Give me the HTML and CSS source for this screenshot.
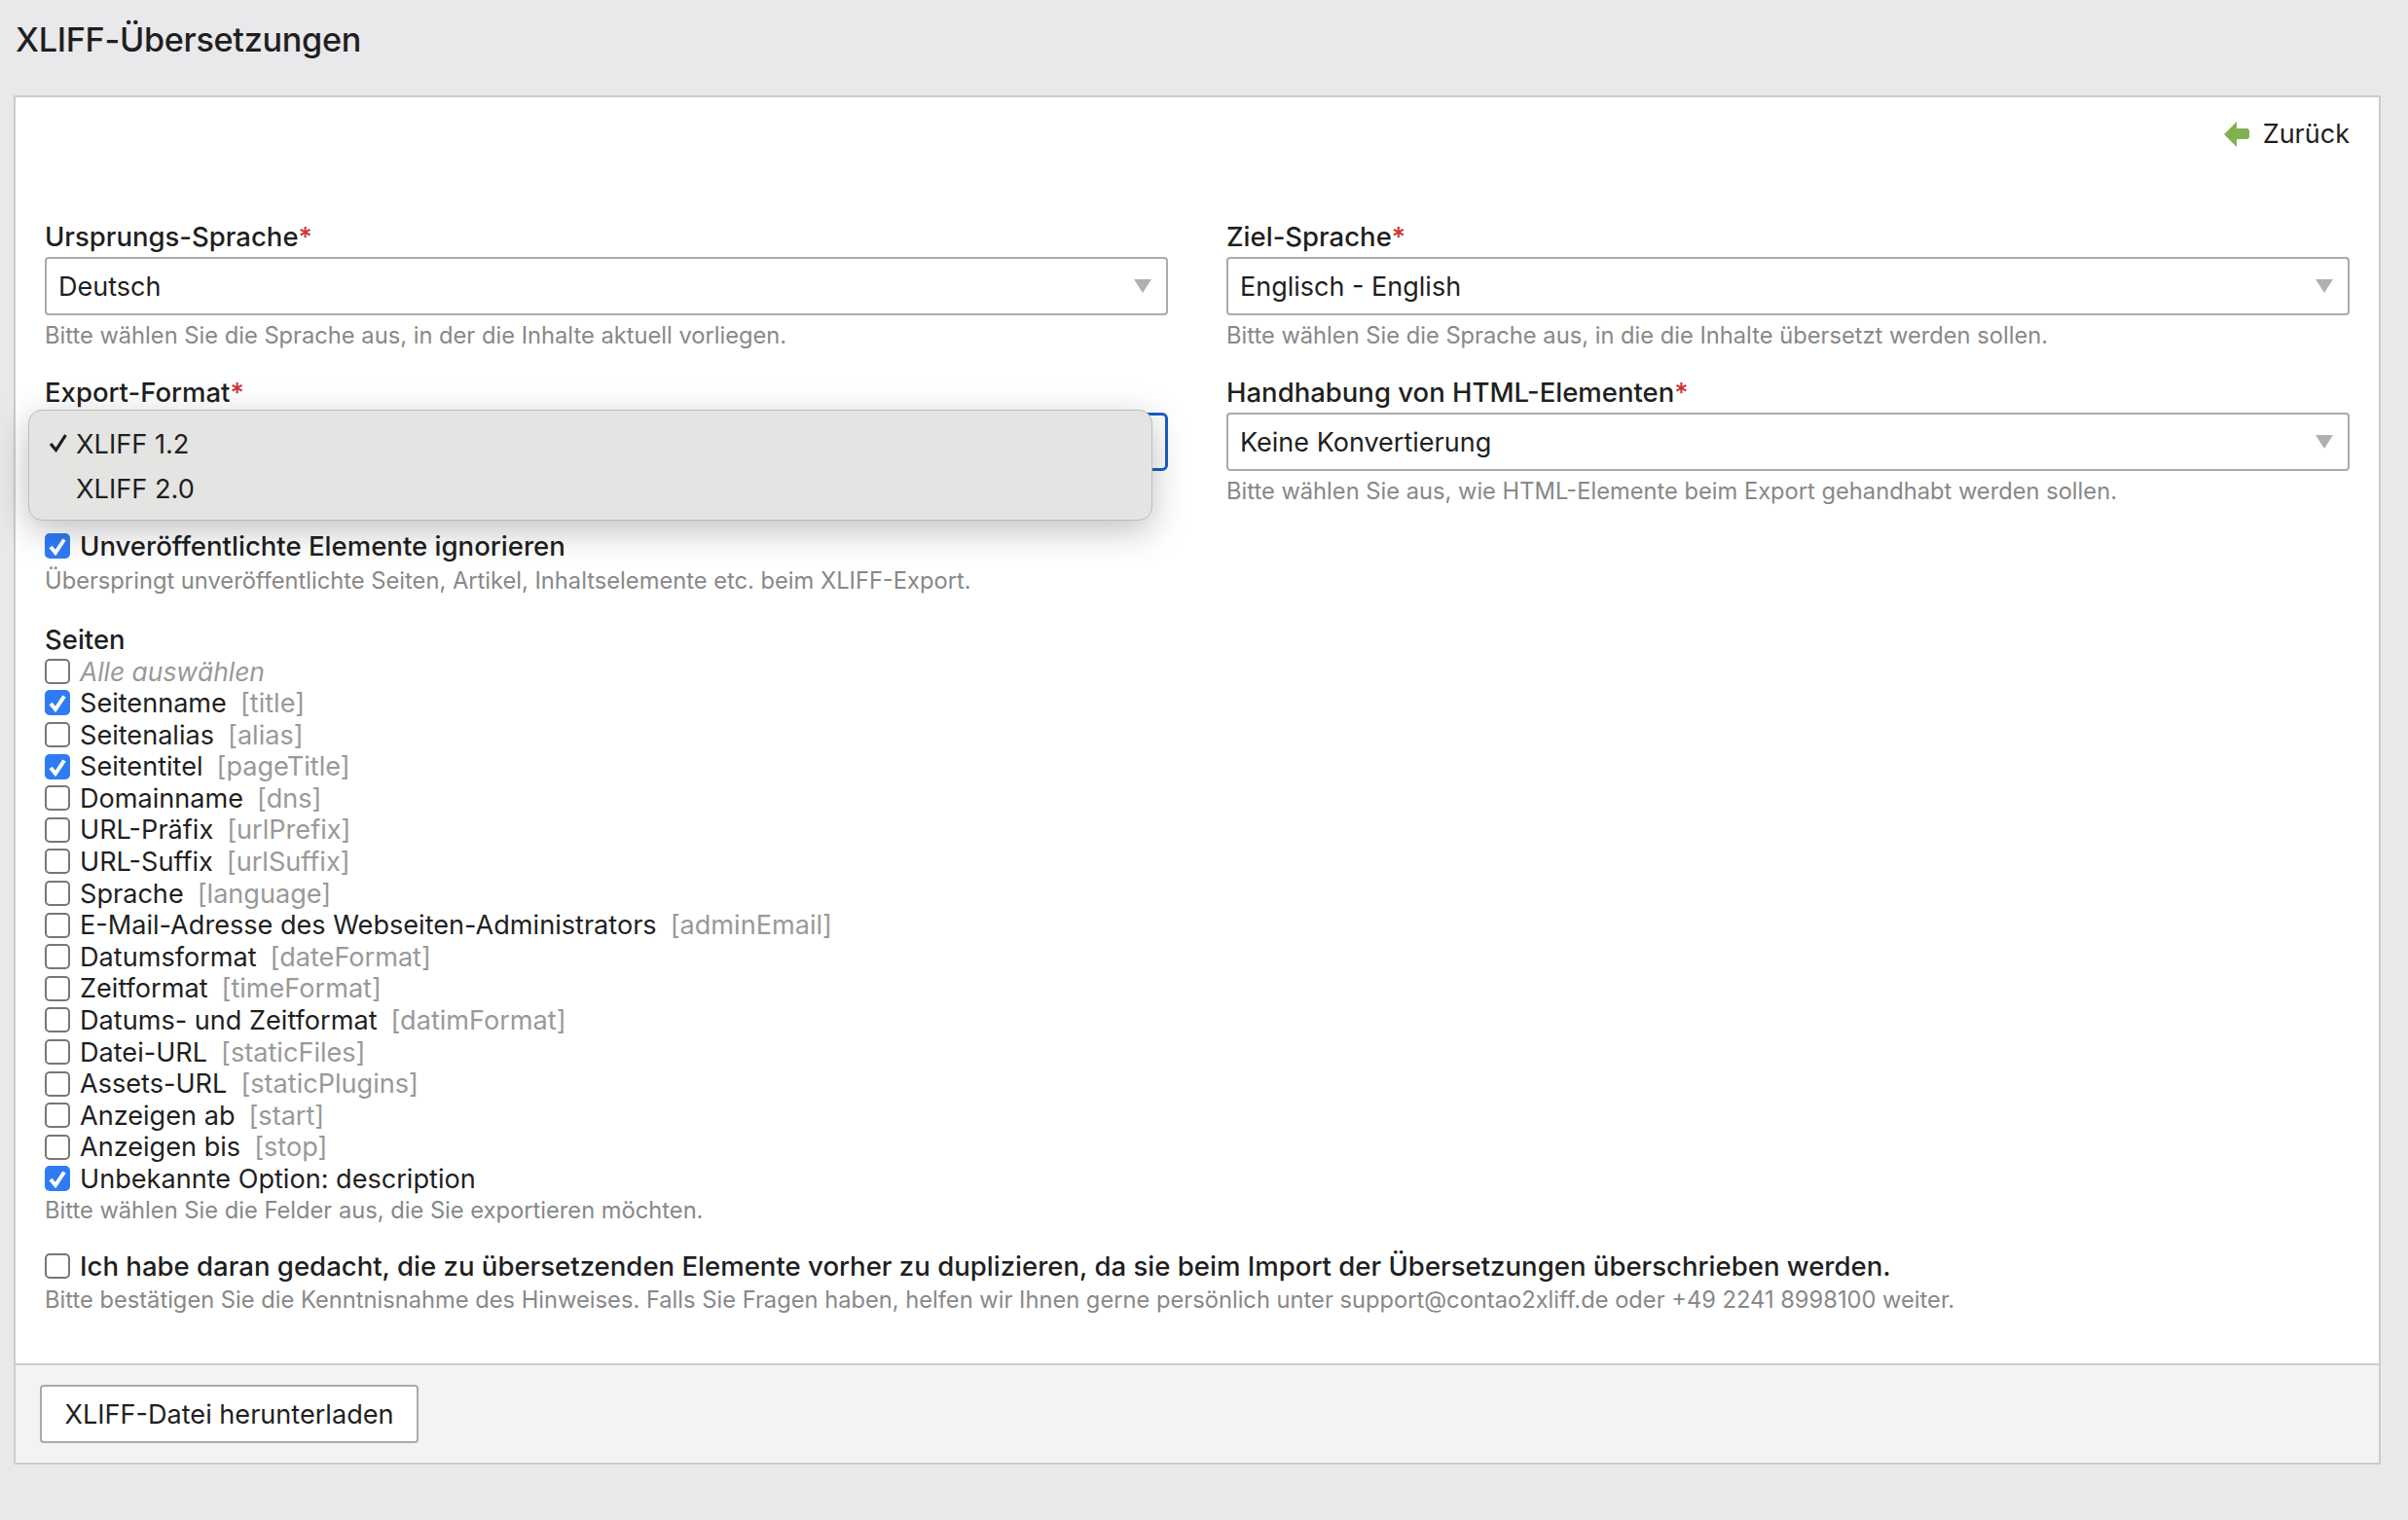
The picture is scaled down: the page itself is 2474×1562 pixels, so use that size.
FILE: index.html
```html
<!DOCTYPE html>
<html lang="de">
<head>
<meta charset="utf-8">
<title>XLIFF-Übersetzungen</title>
<link rel="stylesheet" href="styles.css">
</head>
<body>
<h1 class="title">XLIFF-Übersetzungen</h1>
<main class="panel">
  <div class="content">
    <div class="back-row">
      <a class="back">
        <svg class="back-icon" width="26" height="26" viewBox="0 0 26 26"><path d="M13 0 L0 13 L13 26 V18 H23 Q26 18 26 15 V10 Q26 7 23 7 H13 Z" fill="#7fb24f"/></svg>
        Zurück
      </a>
    </div>
    <div class="fields">
      <div class="field">
        <label class="label">Ursprungs-Sprache<span class="req">*</span></label>
        <div class="select"><span>Deutsch</span><i class="caret"></i></div>
        <p class="help">Bitte wählen Sie die Sprache aus, in der die Inhalte aktuell vorliegen.</p>
      </div>
      <div class="field">
        <label class="label">Ziel-Sprache<span class="req">*</span></label>
        <div class="select"><span>Englisch - English</span><i class="caret"></i></div>
        <p class="help">Bitte wählen Sie die Sprache aus, in die die Inhalte übersetzt werden sollen.</p>
      </div>
      <div class="field">
        <label class="label">Export-Format<span class="req">*</span></label>
        <div class="select select-open">
          <i class="caret"></i>
          <div class="menu">
            <div class="menu-item"><svg class="tick" width="20" height="20" viewBox="0 0 20 20"><path d="M2 11 L7.5 17.5 L17.5 2" fill="none" stroke="#1e1e1e" stroke-width="3.2"/></svg>XLIFF 1.2</div>
            <div class="menu-item">XLIFF 2.0</div>
          </div>
        </div>
      </div>
      <div class="field">
        <label class="label">Handhabung von HTML-Elementen<span class="req">*</span></label>
        <div class="select"><span>Keine Konvertierung</span><i class="caret"></i></div>
        <p class="help">Bitte wählen Sie aus, wie HTML-Elemente beim Export gehandhabt werden sollen.</p>
      </div>
    </div>

    <div class="option-block first-block">
      <div class="check-row strong"><span class="cb on"><svg viewBox="0 0 26 26"><path d="M6 14 L11 20 L20 6.5" fill="none" stroke="#fff" stroke-width="4"/></svg></span>Unveröffentlichte Elemente ignorieren</div>
      <p class="help">Überspringt unveröffentlichte Seiten, Artikel, Inhaltselemente etc. beim XLIFF-Export.</p>
    </div>

    <div class="option-block pages">
      <div class="group-label">Seiten</div>
      <div class="rows">
        <div class="check-row"><span class="cb"></span><em class="all">Alle auswählen</em></div>
        <div class="check-row"><span class="cb on"><svg viewBox="0 0 26 26"><path d="M6 14 L11 20 L20 6.5" fill="none" stroke="#fff" stroke-width="4"/></svg></span>Seitenname<span class="key">[title]</span></div>
        <div class="check-row"><span class="cb"></span>Seitenalias<span class="key">[alias]</span></div>
        <div class="check-row"><span class="cb on"><svg viewBox="0 0 26 26"><path d="M6 14 L11 20 L20 6.5" fill="none" stroke="#fff" stroke-width="4"/></svg></span>Seitentitel<span class="key">[pageTitle]</span></div>
        <div class="check-row"><span class="cb"></span>Domainname<span class="key">[dns]</span></div>
        <div class="check-row"><span class="cb"></span>URL-Präfix<span class="key">[urlPrefix]</span></div>
        <div class="check-row"><span class="cb"></span>URL-Suffix<span class="key">[urlSuffix]</span></div>
        <div class="check-row"><span class="cb"></span>Sprache<span class="key">[language]</span></div>
        <div class="check-row"><span class="cb"></span>E-Mail-Adresse des Webseiten-Administrators<span class="key">[adminEmail]</span></div>
        <div class="check-row"><span class="cb"></span>Datumsformat<span class="key">[dateFormat]</span></div>
        <div class="check-row"><span class="cb"></span>Zeitformat<span class="key">[timeFormat]</span></div>
        <div class="check-row"><span class="cb"></span>Datums- und Zeitformat<span class="key">[datimFormat]</span></div>
        <div class="check-row"><span class="cb"></span>Datei-URL<span class="key">[staticFiles]</span></div>
        <div class="check-row"><span class="cb"></span>Assets-URL<span class="key">[staticPlugins]</span></div>
        <div class="check-row"><span class="cb"></span>Anzeigen ab<span class="key">[start]</span></div>
        <div class="check-row"><span class="cb"></span>Anzeigen bis<span class="key">[stop]</span></div>
        <div class="check-row"><span class="cb on"><svg viewBox="0 0 26 26"><path d="M6 14 L11 20 L20 6.5" fill="none" stroke="#fff" stroke-width="4"/></svg></span>Unbekannte Option: description</div>
      </div>
      <p class="help">Bitte wählen Sie die Felder aus, die Sie exportieren möchten.</p>
    </div>

    <div class="option-block confirm">
      <div class="check-row strong"><span class="cb"></span>Ich habe daran gedacht, die zu übersetzenden Elemente vorher zu duplizieren, da sie beim Import der Übersetzungen überschrieben werden.</div>
      <p class="help">Bitte bestätigen Sie die Kenntnisnahme des Hinweises. Falls Sie Fragen haben, helfen wir Ihnen gerne persönlich unter support@contao2xliff.de oder +49 2241 8998100 weiter.</p>
    </div>
  </div>
  <footer class="footer">
    <button class="btn" type="button">XLIFF-Datei herunterladen</button>
  </footer>
</main>
</body>
</html>
```
FILE: styles.css
```css
* { box-sizing: border-box; }
html, body { margin: 0; padding: 0; }
body {
  background: #e9e9eb;
  color: #1f1f1f;
  font-family: Inter, "Noto Sans", sans-serif;
  font-size: 27.1px;
  height: 1562px;
  overflow: hidden;
}
.title {
  margin: 0;
  height: 98px;
  padding: 21px 0 0 16px;
  font-size: 34.2px;
  line-height: 40px;
  font-weight: 500;
  letter-spacing: -0.3px;
}
.panel {
  margin: 0 28px 0 14px;
  height: 1407px;
  background: #fff;
  border: 2px solid #ccc;
  display: flex;
  flex-direction: column;
}
.content { flex: 1; padding: 22px 30px 0 30px; }
.back-row { display: flex; justify-content: flex-end; height: 32px; }
.back { display: flex; align-items: center; gap: 14px; font-size: 27px; line-height: 32px; }
.back-icon { display: block; }
.fields {
  margin-top: 73px;
  display: grid;
  grid-template-columns: 1154px 1154px;
  column-gap: 60px;
  row-gap: 0;
  grid-auto-rows: 160px;
}
.label { display: block; font-size: 27.5px; line-height: 32px; font-weight: 500; margin-bottom: 5px; }
.req { color: #c33; }
.select {
  position: relative;
  height: 60px;
  border: 2px solid #aaa;
  border-radius: 4px;
  padding: 0 15px 0 12px;
  display: flex;
  align-items: center;
  justify-content: space-between;
  font-size: 27px;
  background: #fff;
}
.caret {
  width: 0;
  height: 0;
  border-left: 9px solid transparent;
  border-right: 9px solid transparent;
  border-top: 14px solid #b0b0b0;
}
.select-open { border-color: #1b5fc4; border-width: 3px; border-radius: 6px; justify-content: flex-end; }
.menu {
  position: absolute;
  left: -20px;
  top: -6px;
  width: 1155px;
  height: 114px;
  padding-top: 11px;
  background: #e4e4e2;
  border: 1px solid #bcbcbc;
  border-radius: 14px;
  box-shadow: 0 10px 36px rgba(0, 0, 0, 0.25);
}
.menu-item { height: 46px; display: flex; align-items: center; padding-left: 48px; position: relative; font-size: 27.2px; }
.tick { position: absolute; left: 20px; top: 12px; }
.help { margin: 6px 0 0; font-size: 23.7px; line-height: 30px; color: #888; }
.option-block .help { margin-top: 4px; }
.first-block { margin-top: -2px; }
.pages { margin-top: 29px; }
.pages .help { margin-top: 1px; }
.confirm { margin-top: 26px; }
.check-row { display: flex; align-items: center; height: 32.6px; }
.strong { font-weight: 500; font-size: 27.55px; }
.cb {
  flex: none;
  width: 26px;
  height: 26px;
  margin-right: 10px;
  border: 2px solid #777;
  border-radius: 5px;
  background: #fff;
}
.cb.on { background: #2f7bf6; border: 0; }
.cb svg { display: block; width: 26px; height: 26px; }
.key { margin-left: 14px; color: #999; }
.all { color: #999; font-size: 26.4px; }
.group-label { font-size: 27.5px; line-height: 32px; font-weight: 500; margin-bottom: 1px; }
.footer {
  height: 102px;
  background: #f3f3f5;
  border-top: 2px solid #ccc;
  padding: 20px 0 0 25px;
}
.btn {
  display: block;
  width: 389px;
  height: 60px;
  background: #fff;
  border: 2px solid #aaa;
  border-radius: 4px;
  font: inherit;
  font-size: 27.1px;
  color: #1f1f1f;
  padding: 0;
}
```
